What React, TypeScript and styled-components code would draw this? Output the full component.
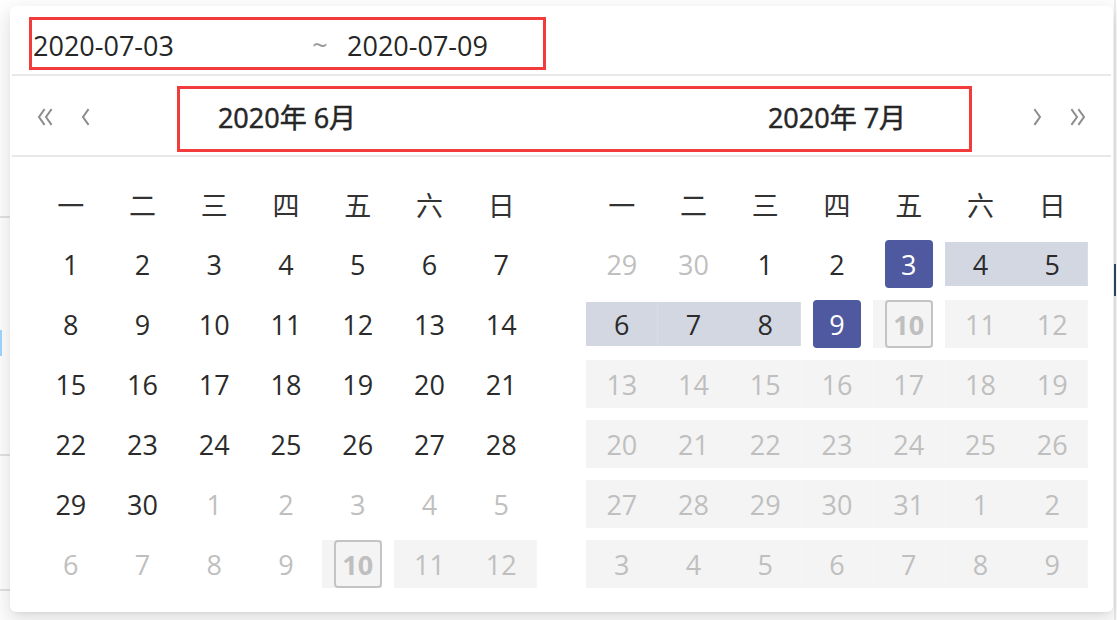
import React from "react";
import styled, { createGlobalStyle, css } from "styled-components";

const Global = createGlobalStyle`
  html, body { margin: 0; padding: 0; background: #ffffff; }
  body { font-family: "Open Sans", "Noto Sans CJK SC", sans-serif; color: #262626; }
  * { box-sizing: border-box; }
`;

const Page = styled.div`
  position: relative;
  width: 1117px;
  height: 620px;
  overflow: hidden;
  padding: 6px 0 0 10px;
`;

const BackLine = styled.div<{ $top: number }>`
  position: absolute;
  left: 0;
  top: ${(p) => p.$top}px;
  width: 10px;
  height: 2px;
  background: #e3e3e3;
`;

const BackBlue = styled.div`
  position: absolute;
  left: 0;
  top: 330px;
  width: 2px;
  height: 26px;
  background: #9fd8ff;
`;

const BackRule = styled.div`
  position: absolute;
  right: 1px;
  top: 0;
  width: 2px;
  height: 620px;
  background: #ececec;
`;

const BackMark = styled.div`
  position: absolute;
  right: 1px;
  top: 264px;
  width: 2px;
  height: 32px;
  background: #2a4a66;
`;

const Card = styled.div`
  position: relative;
  z-index: 1;
  width: 1103px;
  height: 606px;
  background: #ffffff;
  border-radius: 6px;
  box-shadow: 0 3px 6px -4px rgba(0, 0, 0, 0.12), 0 6px 16px 0 rgba(0, 0, 0, 0.08),
    0 9px 28px 8px rgba(0, 0, 0, 0.05);
  display: flex;
  flex-direction: column;
`;

const InputRow = styled.div`
  height: 70px;
  margin: 0 2px;
  border-bottom: 2px solid #e8e8e8;
  padding: 11px 0 0 17px;
`;

const Annot = styled.div`
  border: 3px solid #f23b3b;
`;

const InputBox = styled(Annot)`
  width: 517px;
  height: 53px;
  display: flex;
  align-items: center;
  padding-left: 1px;
`;

const DateText = styled.span<{ $w?: number }>`
  font-size: 27px;
  color: #262626;
  width: ${(p) => (p.$w ? `${p.$w}px` : "auto")};
  white-space: nowrap;
  line-height: 1;
  padding-top: 4px;
`;

const Tilde = styled.span`
  width: 46px;
  text-align: center;
  font-size: 27px;
  color: #9a9a9a;
  line-height: 1;
  padding-top: 2px;
  padding-right: 8px;
`;

const HeaderRow = styled.div`
  height: 81px;
  margin: 0 2px;
  border-bottom: 2px solid #e8e8e8;
  display: flex;
  align-items: flex-start;
  padding-left: 25px;
`;

const NavGroup = styled.div<{ $w: number }>`
  width: ${(p) => p.$w}px;
  height: 82px;
  display: flex;
  align-items: center;
  gap: 28px;
`;

const NavSpacer = styled.span`
  width: 33px;
`;

const NavIcon = styled.svg`
  display: block;
  flex: none;
`;

const TitleBox = styled(Annot)`
  margin-top: 10px;
  width: 795px;
  height: 66px;
  display: flex;
  align-items: center;
`;

const Title = styled.div<{ $w: number }>`
  width: ${(p) => p.$w}px;
  text-align: center;
  font-size: 27px;
  font-weight: 400;
  -webkit-text-stroke: 0.5px #262626;
  color: #262626;
  white-space: nowrap;
  line-height: 1;
  padding-bottom: 4px;
`;

const Body = styled.div`
  display: flex;
  gap: 49px;
  padding: 17px 25px 0;
`;

const Panel = styled.div`
  width: 502px;
  display: grid;
  grid-template-columns: repeat(7, 1fr);
`;

const WeekDay = styled.div`
  height: 60px;
  display: flex;
  align-items: center;
  justify-content: center;
  font-size: 27px;
  color: #333333;
  font-family: "Noto Sans CJK SC", sans-serif;
`;

type Kind = "normal" | "muted" | "start" | "end" | "range" | "today" | "disabled";

const bar = (color: string, h: number) => css`
  background-image: linear-gradient(${color}, ${color});
  background-repeat: no-repeat;
  background-size: 100% ${h}px;
  background-position: center;
`;

const Cell = styled.div<{ $kind: Kind }>`
  height: 60px;
  display: flex;
  align-items: center;
  justify-content: center;
  ${(p) => p.$kind === "range" && bar("#d3d7e1", 44)}
  ${(p) => p.$kind === "disabled" && bar("#f4f4f4", 48)}
  ${(p) =>
    p.$kind === "today" &&
    css`
      ${bar("#f4f4f4", 48)}
      background-size: calc(50% + 24px) 48px;
      background-position: left center;
    `}
`;

const Day = styled.span<{ $kind: Kind }>`
  width: 48px;
  height: 48px;
  border-radius: 4px;
  display: flex;
  align-items: center;
  justify-content: center;
  font-size: 27px;
  line-height: 1;
  padding-top: 1px;
  color: ${(p) =>
    p.$kind === "muted" || p.$kind === "disabled" || p.$kind === "today"
      ? "#bfbfbf"
      : "#2b2b2b"};
  ${(p) =>
    (p.$kind === "start" || p.$kind === "end") &&
    css`
      background: #4f59a0;
      color: #ffffff;
    `}
  ${(p) =>
    p.$kind === "today" &&
    css`
      border: 2px solid #c4c4c4;
      font-weight: 700;
      padding-top: 0;
    `}
`;

const weekDays = ["一", "二", "三", "四", "五", "六", "日"];

type D = [number, Kind];

const mk = (nums: number[], kind: Kind): D[] => nums.map((n) => [n, kind]);
const range = (a: number, b: number) => Array.from({ length: b - a + 1 }, (_, i) => a + i);

const june: D[] = [
  ...mk(range(1, 30), "normal"),
  ...mk(range(1, 9), "muted"),
  [10, "today"],
  ...mk([11, 12], "disabled"),
];

const july: D[] = [
  ...mk([29, 30], "muted"),
  ...mk([1, 2], "normal"),
  [3, "start"],
  ...mk([4, 5, 6, 7, 8], "range"),
  [9, "end"],
  [10, "today"],
  ...mk(range(11, 31), "disabled"),
  ...mk(range(1, 9), "disabled"),
];

const Chevron: React.FC<{ dir: "left" | "right"; double?: boolean }> = ({ dir, double }) => {
  const w = double ? 16 : 9;
  const one = (x: number) =>
    dir === "left"
      ? `M${x + 7} 2 L${x + 2} 9 L${x + 7} 16`
      : `M${x + 2} 2 L${x + 7} 9 L${x + 2} 16`;
  return (
    <NavIcon width={w} height={18} viewBox={`0 0 ${w} 18`} fill="none">
      <path d={one(0)} stroke="#8c8c8c" strokeWidth="2" strokeLinecap="square" />
      {double && <path d={one(7)} stroke="#8c8c8c" strokeWidth="2" strokeLinecap="square" />}
    </NavIcon>
  );
};

const MonthPanel: React.FC<{ days: D[] }> = ({ days }) => (
  <Panel>
    {weekDays.map((w) => (
      <WeekDay key={w}>{w}</WeekDay>
    ))}
    {days.map(([n, k], i) => (
      <Cell key={i} $kind={k}>
        <Day $kind={k}>{n}</Day>
      </Cell>
    ))}
  </Panel>
);

export default function App() {
  return (
    <>
      <Global />
      <Page>
        <BackLine $top={216} />
        <BackLine $top={454} />
        <BackLine $top={589} />
        <BackBlue />
        <BackRule />
        <BackMark />
        <Card>
          <InputRow>
            <InputBox>
              <DateText $w={268}>2020-07-03</DateText>
              <Tilde>~</Tilde>
              <DateText>2020-07-09</DateText>
            </InputBox>
          </InputRow>
          <HeaderRow>
            <NavGroup $w={140}>
              <Chevron dir="left" double />
              <Chevron dir="left" />
            </NavGroup>
            <TitleBox>
              <Title $w={214}>2020年 6月</Title>
              <Title $w={336} />
              <Title $w={214}>2020年 7月</Title>
            </TitleBox>
            <NavGroup $w={130}>
              <NavSpacer />
              <Chevron dir="right" />
              <Chevron dir="right" double />
            </NavGroup>
          </HeaderRow>
          <Body>
            <MonthPanel days={june} />
            <MonthPanel days={july} />
          </Body>
        </Card>
      </Page>
    </>
  );
}
